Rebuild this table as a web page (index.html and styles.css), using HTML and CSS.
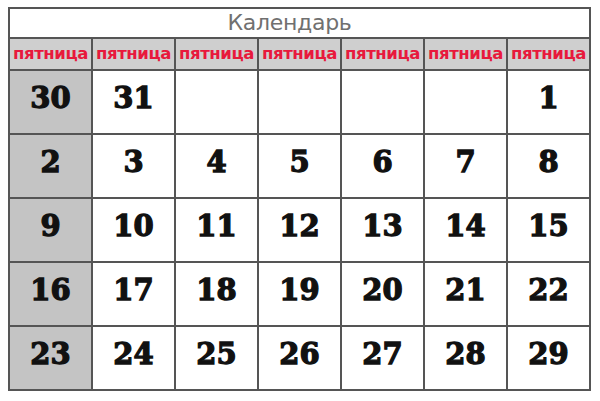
FILE: index.html
```html
<!DOCTYPE html>
<html lang="ru">
<head>
<meta charset="utf-8">
<title>Календарь</title>
<link rel="stylesheet" href="styles.css">
</head>
<body>
<div class="cal">
  <div class="title">Календарь</div>
  <div class="hd">пятница</div>
  <div class="hd">пятница</div>
  <div class="hd">пятница</div>
  <div class="hd">пятница</div>
  <div class="hd">пятница</div>
  <div class="hd">пятница</div>
  <div class="hd">пятница</div>

  <div class="day first">30</div>
  <div class="day">31</div>
  <div class="day"></div>
  <div class="day"></div>
  <div class="day"></div>
  <div class="day"></div>
  <div class="day">1</div>

  <div class="day first">2</div>
  <div class="day">3</div>
  <div class="day">4</div>
  <div class="day">5</div>
  <div class="day">6</div>
  <div class="day">7</div>
  <div class="day">8</div>

  <div class="day first">9</div>
  <div class="day">10</div>
  <div class="day">11</div>
  <div class="day">12</div>
  <div class="day">13</div>
  <div class="day">14</div>
  <div class="day">15</div>

  <div class="day first">16</div>
  <div class="day">17</div>
  <div class="day">18</div>
  <div class="day">19</div>
  <div class="day">20</div>
  <div class="day">21</div>
  <div class="day">22</div>

  <div class="day first">23</div>
  <div class="day">24</div>
  <div class="day">25</div>
  <div class="day">26</div>
  <div class="day">27</div>
  <div class="day">28</div>
  <div class="day">29</div>
</div>
</body>
</html>
```

FILE: styles.css
```css
html, body {
  margin: 0;
  padding: 0;
  background: #ffffff;
}
.cal {
  margin: 7px 0 0 8px;
  width: 583px;
  box-sizing: border-box;
  display: grid;
  grid-template-columns: repeat(7, 1fr);
  grid-template-rows: 28px 30px repeat(5, 62px);
  gap: 2px;
  padding: 2px;
  background: #555555;
}
.title {
  grid-column: 1 / -1;
  background: #ffffff;
  color: #707070;
  font-family: "DejaVu Sans", sans-serif;
  font-size: 22px;
  letter-spacing: -0.3px;
  line-height: 28px;
  text-align: center;
  padding-right: 20px;
}
.hd {
  background: #cfcfcf;
  color: #e8193c;
  font-family: "DejaVu Sans", sans-serif;
  font-weight: bold;
  font-size: 16.5px;
  letter-spacing: -0.4px;
  line-height: 30px;
  text-align: center;
  white-space: nowrap;
  overflow: hidden;
}
.day {
  background: #ffffff;
  color: #111111;
  font-family: "DejaVu Serif", serif;
  font-weight: bold;
  font-size: 29px;
  line-height: 30px;
  padding-top: 12px;
  text-align: center;
  -webkit-text-stroke: 1.3px #111111;
}
.day.first {
  background: #c4c4c4;
}
```
